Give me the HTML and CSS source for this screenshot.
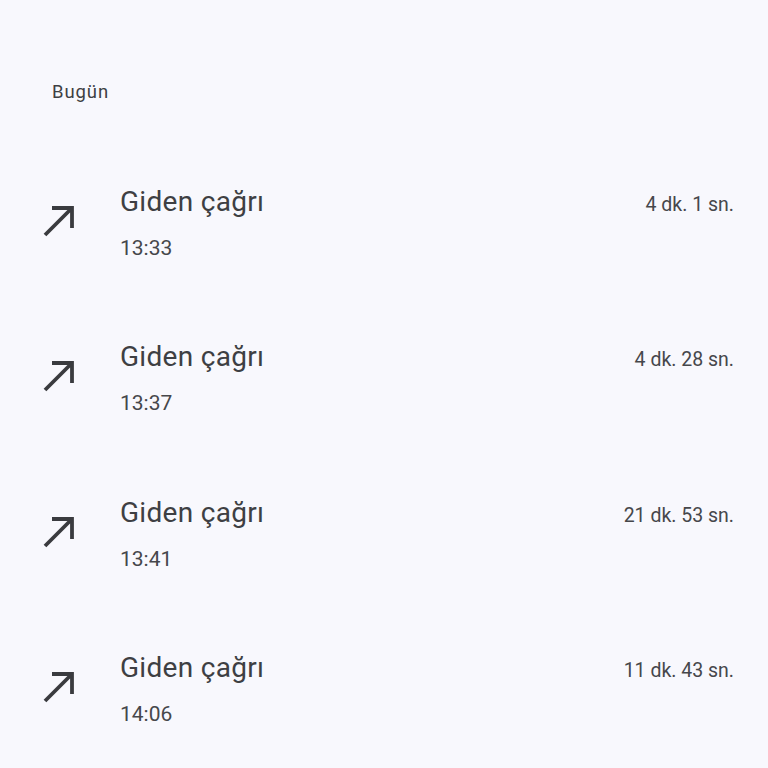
FILE: index.html
```html
<!DOCTYPE html>
<html lang="tr">
<head>
<meta charset="utf-8">
<link rel="stylesheet" href="styles.css">
</head>
<body>
<main class="log">
  <h2 class="day">Bugün</h2>
  <ul class="calls">
    <li class="call">
      <svg class="icon" viewBox="0 0 32 32"><path d="M3 30 L30 3 M10 3 H30 V23" /></svg>
      <div class="info"><div class="title">Giden çağrı</div><div class="time">13:33</div></div>
      <div class="dur">4 dk. 1 sn.</div>
    </li>
    <li class="call">
      <svg class="icon" viewBox="0 0 32 32"><path d="M3 30 L30 3 M10 3 H30 V23" /></svg>
      <div class="info"><div class="title">Giden çağrı</div><div class="time">13:37</div></div>
      <div class="dur">4 dk. 28 sn.</div>
    </li>
    <li class="call">
      <svg class="icon" viewBox="0 0 32 32"><path d="M3 30 L30 3 M10 3 H30 V23" /></svg>
      <div class="info"><div class="title">Giden çağrı</div><div class="time">13:41</div></div>
      <div class="dur">21 dk. 53 sn.</div>
    </li>
    <li class="call">
      <svg class="icon" viewBox="0 0 32 32"><path d="M3 30 L30 3 M10 3 H30 V23" /></svg>
      <div class="info"><div class="title">Giden çağrı</div><div class="time">14:06</div></div>
      <div class="dur">11 dk. 43 sn.</div>
    </li>
  </ul>
</main>
</body>
</html>
```
FILE: styles.css
```css
* { box-sizing: border-box; }
html, body { margin: 0; padding: 0; }
body {
  background: #f8f8fd;
  font-family: Roboto, "Open Sans", sans-serif;
  color: #404246;
  width: 768px;
  height: 768px;
  overflow: hidden;
}
.log { padding-top: 80px; }
.day {
  margin: 0;
  padding-left: 52px;
  font-size: 18.5px;
  line-height: 24px;
  letter-spacing: 0.9px;
  font-weight: 400;
  color: #3e3f43;
  height: 63px;
}
.calls { list-style: none; margin: 0; padding: 0; }
.call {
  display: flex;
  align-items: flex-start;
  height: 155.33px;
  padding: 42px 34px 0 42px;
}
.icon {
  width: 32px;
  height: 32px;
  margin-top: 20px;
  flex: none;
  fill: none;
  stroke: #3a3b3f;
  stroke-width: 3.8;
}
.info { margin-left: 46px; flex: 1; }
.title { font-size: 28px; line-height: 34px; letter-spacing: 0.3px; color: #3e3f43; }
.time { font-size: 21px; line-height: 32px; margin-top: 13px; color: #46474b; }
.dur { font-size: 19.5px; line-height: 24px; margin-top: 8px; color: #46474b; }
```
